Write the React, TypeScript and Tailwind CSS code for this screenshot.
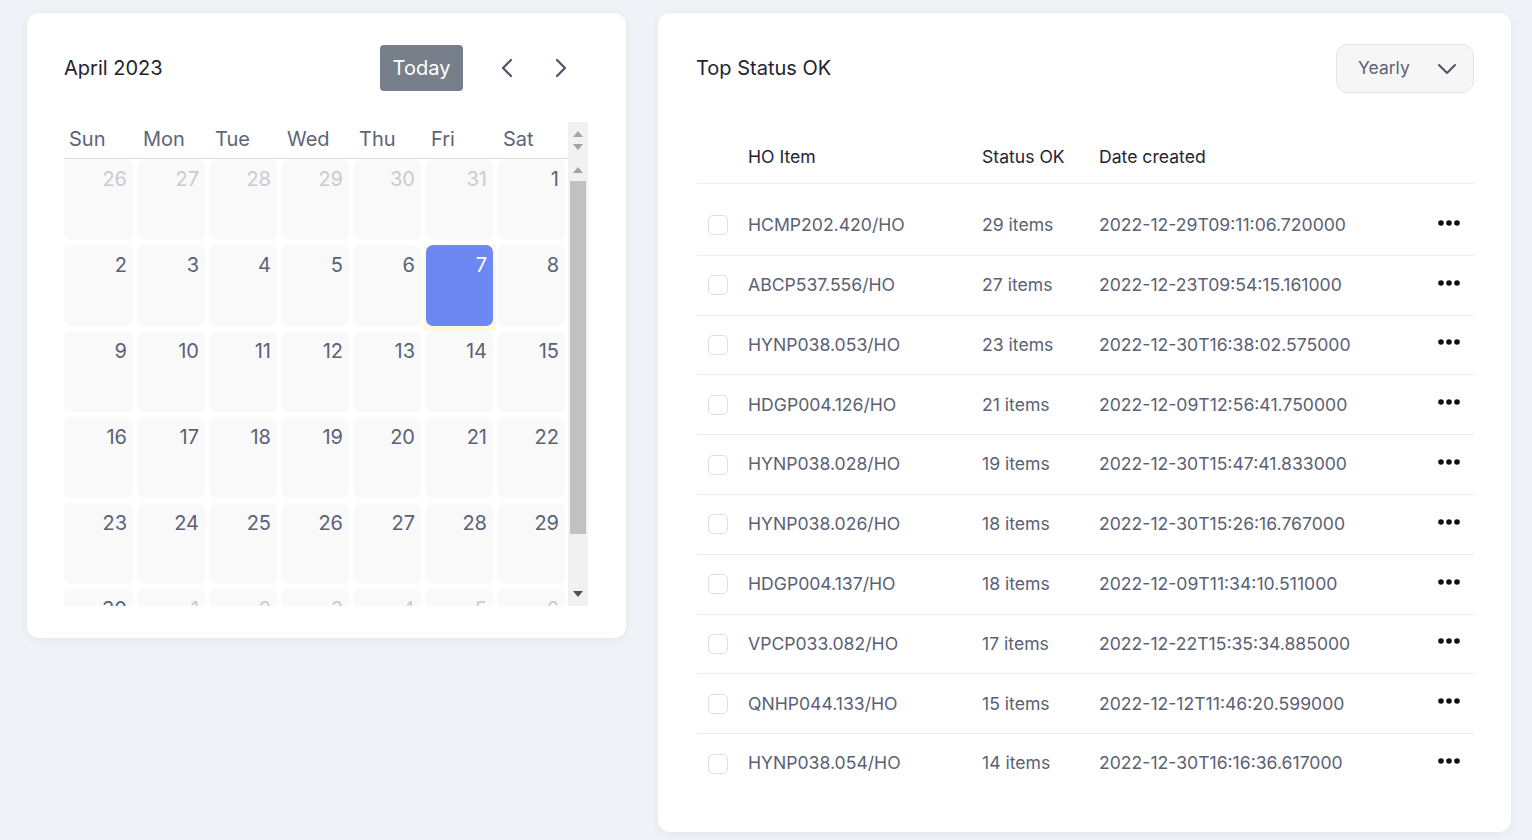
import React from "react";

const days = ["Sun", "Mon", "Tue", "Wed", "Thu", "Fri", "Sat"];

type Cell = { d: number; other?: boolean; today?: boolean };
const weeks: Cell[][] = [
  [{ d: 26, other: true }, { d: 27, other: true }, { d: 28, other: true }, { d: 29, other: true }, { d: 30, other: true }, { d: 31, other: true }, { d: 1 }],
  [{ d: 2 }, { d: 3 }, { d: 4 }, { d: 5 }, { d: 6 }, { d: 7, today: true }, { d: 8 }],
  [{ d: 9 }, { d: 10 }, { d: 11 }, { d: 12 }, { d: 13 }, { d: 14 }, { d: 15 }],
  [{ d: 16 }, { d: 17 }, { d: 18 }, { d: 19 }, { d: 20 }, { d: 21 }, { d: 22 }],
  [{ d: 23 }, { d: 24 }, { d: 25 }, { d: 26 }, { d: 27 }, { d: 28 }, { d: 29 }],
  [{ d: 30 }, { d: 1, other: true }, { d: 2, other: true }, { d: 3, other: true }, { d: 4, other: true }, { d: 5, other: true }, { d: 6, other: true }],
];

const rows = [
  ["HCMP202.420/HO", "29 items", "2022-12-29T09:11:06.720000"],
  ["ABCP537.556/HO", "27 items", "2022-12-23T09:54:15.161000"],
  ["HYNP038.053/HO", "23 items", "2022-12-30T16:38:02.575000"],
  ["HDGP004.126/HO", "21 items", "2022-12-09T12:56:41.750000"],
  ["HYNP038.028/HO", "19 items", "2022-12-30T15:47:41.833000"],
  ["HYNP038.026/HO", "18 items", "2022-12-30T15:26:16.767000"],
  ["HDGP004.137/HO", "18 items", "2022-12-09T11:34:10.511000"],
  ["VPCP033.082/HO", "17 items", "2022-12-22T15:35:34.885000"],
  ["QNHP044.133/HO", "15 items", "2022-12-12T11:46:20.599000"],
  ["HYNP038.054/HO", "14 items", "2022-12-30T16:16:36.617000"],
];

function Tri({ up, color }: { up?: boolean; color: string }) {
  return (
    <svg width="10" height="6" viewBox="0 0 10 6">
      {up ? <polygon points="5,0 10,6 0,6" fill={color} /> : <polygon points="0,0 10,0 5,6" fill={color} />}
    </svg>
  );
}

function Dots() {
  return (
    <svg width="22" height="6" viewBox="0 0 22 6">
      <circle cx="3" cy="3" r="2.8" fill="#111" />
      <circle cx="11" cy="3" r="2.8" fill="#111" />
      <circle cx="19" cy="3" r="2.8" fill="#111" />
    </svg>
  );
}

export default function App() {
  return (
    <div
      className="w-full h-[840px] bg-[#eff2f6] flex items-start gap-[32px] pl-[27px] pt-[13px]"
      style={{ fontFamily: "Inter, 'Noto Sans', sans-serif" }}
    >
      {/* Calendar card */}
      <div className="w-[599px] bg-white rounded-[12px] shadow-[0_2px_10px_rgba(30,40,60,0.06)] pl-[37px] pr-[37px] pt-[32px] pb-[32px]">
        <div className="flex items-center h-[46px]">
          <div className="text-[20px] text-[#1f2430]">April 2023</div>
          <button className="ml-auto w-[83px] h-[46px] rounded-[4px] bg-[#777f8b] text-white text-[20px]">Today</button>
          <button className="ml-[30px] w-[28px] h-[28px] flex items-center justify-center">
            <svg width="14" height="20" viewBox="0 0 14 20" fill="none" stroke="#4b5366" strokeWidth="2.2" strokeLinecap="round" strokeLinejoin="round">
              <polyline points="11,2 3,10 11,18" />
            </svg>
          </button>
          <button className="ml-[26px] mr-[14px] w-[28px] h-[28px] flex items-center justify-center">
            <svg width="14" height="20" viewBox="0 0 14 20" fill="none" stroke="#4b5366" strokeWidth="2.2" strokeLinecap="round" strokeLinejoin="round">
              <polyline points="3,2 11,10 3,18" />
            </svg>
          </button>
        </div>

        <div className="mt-[31px] flex">
          <div className="grid grid-cols-[repeat(7,72px)] h-[37px] border-b border-[#dddddd]">
            {days.map((d, i) => (
              <div key={d} className={`${i === 0 ? "pl-[5px]" : "pl-[7px]"} text-[20px] leading-[34px] text-[#5d6478]`}>
                {d}
              </div>
            ))}
          </div>
          <div className="w-[20px] h-[37px] bg-[#f1f1f1] flex flex-col items-center justify-center gap-[7px]">
            <Tri up color="#a3a3a3" />
            <Tri color="#a3a3a3" />
          </div>
        </div>

        <div className="flex h-[447px] overflow-hidden">
          <div className="flex flex-col">
            {weeks.map((w, i) => (
              <div key={i} className="grid grid-cols-[repeat(7,72px)] shrink-0">
                {w.map((c, j) => (
                  <div
                    key={j}
                    className={`h-[86px] pt-0 pb-[5px] pr-[3px] ${j === 0 ? "pl-0" : "pl-[2px]"} ${c.today ? "bg-[#fff8e1]" : ""}`}
                  >
                    <div
                      className={`h-full rounded-[7px] text-right pr-[6px] pt-[6px] text-[20px] leading-[28px] ${
                        c.today ? "bg-[#6d88f3] text-white" : c.other ? "bg-[#f9f9f9] text-[#c9cbd2]" : "bg-[#f9f9f9] text-[#5a6276]"
                      }`}
                    >
                      {c.d}
                    </div>
                  </div>
                ))}
              </div>
            ))}
          </div>
          <div className="w-[20px] h-[447px] bg-[#f1f1f1] flex flex-col items-center shrink-0">
            <div className="h-[22px] flex items-center justify-center">
              <Tri up color="#a3a3a3" />
            </div>
            <div className="w-[16px] h-[353px] bg-[#c1c1c1]" />
            <div className="flex-1" />
            <div className="h-[24px] flex items-center justify-center">
              <Tri color="#505050" />
            </div>
          </div>
        </div>
      </div>

      {/* Table card */}
      <div className="w-[853px] bg-white rounded-[12px] shadow-[0_2px_10px_rgba(30,40,60,0.06)] pl-[39px] pr-[37px] pt-[31px] pb-[39px]">
        <div className="flex items-center h-[49px]">
          <div className="text-[20px] text-[#1e2433] leading-[28px] -mt-[2px] -ml-[1px]">Top Status OK</div>
          <div className="ml-auto w-[138px] h-[49px] rounded-[12px] bg-[#f6f6f7] border border-[#e4e5e8] flex items-center pl-[21px] pr-[16px]">
            <span className="text-[17.5px] text-[#5c6275]">Yearly</span>
            <svg className="ml-auto" width="20" height="12" viewBox="0 0 20 12" fill="none" stroke="#4b5366" strokeWidth="2" strokeLinecap="round" strokeLinejoin="round">
              <polyline points="2,2 10,10 18,2" />
            </svg>
          </div>
        </div>

        <div className="mt-[38px]">
          <div className="grid grid-cols-[51px_234px_117px_1fr_60px] h-[53px] items-center border-b border-[#eceef1] text-[17.6px] text-[#1e2433]">
            <div />
            <div>HO Item</div>
            <div>Status OK</div>
            <div>Date created</div>
            <div />
          </div>
          {rows.map((r, i) => (
            <div
              key={i}
              className={`${i === 0 ? "pt-[12px]" : ""} ${i < rows.length - 1 ? "border-b border-[#eceef1]" : ""}`}
            >
              <div className="grid grid-cols-[51px_234px_117px_1fr_60px] h-[58.8px] items-center text-[17.6px] text-[#5a6174]">
                <div className="pl-[11px]">
                  <div className="w-[20px] h-[20px] rounded-[5px] border border-[#dcdfe4] bg-white" />
                </div>
                <div>{r[0]}</div>
                <div>{r[1]}</div>
                <div>{r[2]}</div>
                <div className="flex justify-end pr-[14px] pb-[5px]">
                  <Dots />
                </div>
              </div>
            </div>
          ))}
        </div>
      </div>
    </div>
  );
}
